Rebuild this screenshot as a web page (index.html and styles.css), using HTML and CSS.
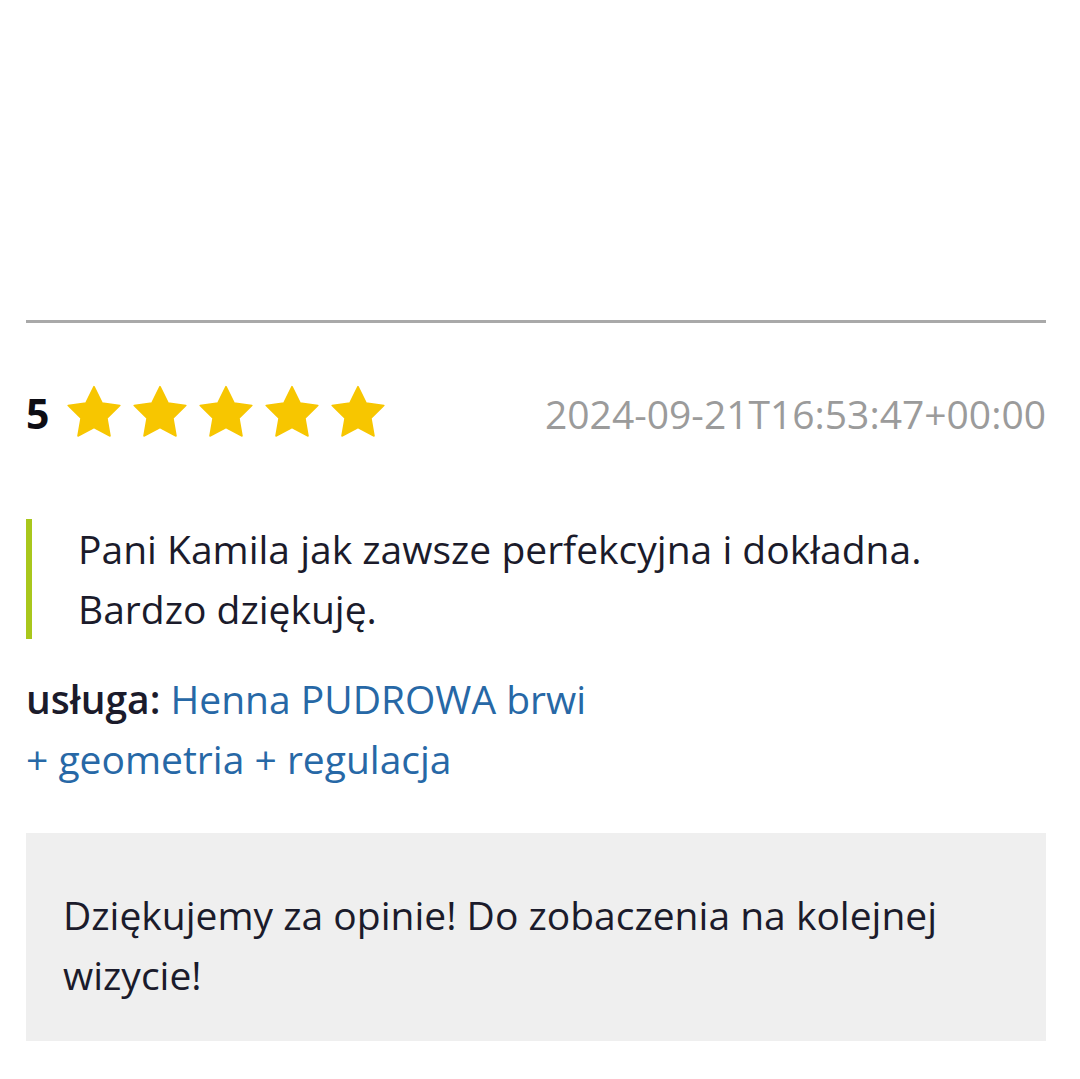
FILE: index.html
```html
<!DOCTYPE html>
<html lang="pl">
<head>
  <meta charset="UTF-8" />
  <meta name="viewport" content="width=device-width, initial-scale=1" />
  <title>Opinia</title>
  <link rel="stylesheet" href="styles.css">
</head>
<body>
  <div class="review">
    <hr class="divider" />

    <div class="rating-row">
      <div class="rating">
        <span class="score">5</span>
        <span class="stars">
          <svg class="star" viewBox="0 0 24 24"><path d="M12 1.8l3.1 6.3 6.9 1-5 4.9 1.2 6.9L12 17.6l-6.2 3.3L7 14l-5-4.9 6.9-1z"/></svg>
          <svg class="star" viewBox="0 0 24 24"><path d="M12 1.8l3.1 6.3 6.9 1-5 4.9 1.2 6.9L12 17.6l-6.2 3.3L7 14l-5-4.9 6.9-1z"/></svg>
          <svg class="star" viewBox="0 0 24 24"><path d="M12 1.8l3.1 6.3 6.9 1-5 4.9 1.2 6.9L12 17.6l-6.2 3.3L7 14l-5-4.9 6.9-1z"/></svg>
          <svg class="star" viewBox="0 0 24 24"><path d="M12 1.8l3.1 6.3 6.9 1-5 4.9 1.2 6.9L12 17.6l-6.2 3.3L7 14l-5-4.9 6.9-1z"/></svg>
          <svg class="star" viewBox="0 0 24 24"><path d="M12 1.8l3.1 6.3 6.9 1-5 4.9 1.2 6.9L12 17.6l-6.2 3.3L7 14l-5-4.9 6.9-1z"/></svg>
        </span>
      </div>
      <time class="date">2024-09-21T16:53:47+00:00</time>
    </div>

    <blockquote class="quote">
      Pani Kamila jak zawsze perfekcyjna i dokładna.<br>Bardzo dziękuję.
    </blockquote>

    <p class="service">
      <b>usługa:</b> <a href="#">Henna PUDROWA brwi<br>+ geometria + regulacja</a>
    </p>

    <div class="reply">
      Dziękujemy za opinie! Do zobaczenia na kolejnej wizycie!
    </div>
  </div>
</body>
</html>
```

FILE: styles.css
```css
body {
  margin: 0;
  font-family: 'Open Sans', sans-serif;
  color: #1b1b2b;
  background: #fff;
}
.review {
  margin: 0 34px 0 26px;
  padding-top: 320px;
}
.divider {
  margin: 0;
  border: none;
  height: 3px;
  background: #a9a9a9;
}
.rating-row {
  display: flex;
  align-items: center;
  justify-content: space-between;
  margin-top: 60px;
  height: 60px;
}
.rating {
  display: flex;
  align-items: center;
}
.score {
  font-size: 41px;
  font-weight: 700;
  color: #0d0d14;
  margin-right: 14px;
}
.stars {
  display: flex;
  gap: 4px;
}
.star {
  width: 62px;
  height: 62px;
  fill: #f7c600;
  stroke: #f7c600;
  stroke-width: 0.6;
  stroke-linejoin: round;
}
.date {
  font-size: 39px;
  color: #9b9b9b;
}
.quote {
  margin: 76px 0 0;
  border-left: 6px solid #a9c71c;
  padding: 0 0 0 46px;
  font-size: 39px;
  line-height: 60px;
}
.service {
  margin: 30px 0 0;
  font-size: 39px;
  line-height: 60px;
}
.service b {
  font-weight: 600;
}
.service a {
  color: #2768a6;
  text-decoration: none;
}
.reply {
  margin-top: 44px;
  background: #efefef;
  padding: 52px 100px 36px 37px;
  font-size: 39px;
  line-height: 60px;
}
```
